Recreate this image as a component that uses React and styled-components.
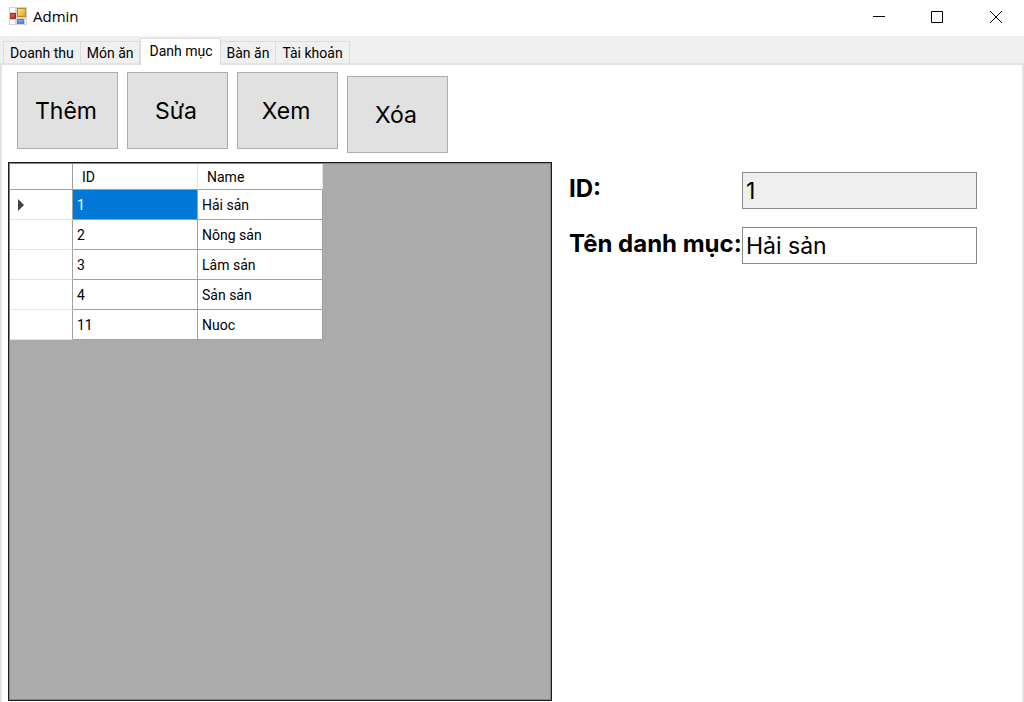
import React, { useState } from "react";
import styled, { createGlobalStyle } from "styled-components";

const GlobalStyle = createGlobalStyle`
  * { box-sizing: border-box; }
  body { margin: 0; background: #fff; color: #000; font: 14px/20px Roboto, "Liberation Sans", sans-serif; }
  button, input { font: inherit; color: inherit; }
`;

const Window = styled.div`
  display: flex;
  flex-direction: column;
  min-height: 100vh;
`;

const TitleBar = styled.header`
  display: flex;
  align-items: center;
  height: 36px;
  padding-left: 8px;
  background: #fff;
`;

const Title = styled.h1`
  flex: 1;
  margin: 0 0 0 6px;
  padding-bottom: 4px;
  font: 400 15px/20px "Open Sans", "Noto Sans", sans-serif;
`;

const AppIcon = styled.svg`
  display: block;
  margin-bottom: 4px;
`;

const CaptionButton = styled.button`
  display: grid;
  place-items: center;
  width: 58px;
  height: 36px;
  padding: 0 0 2px;
  border: 0;
  background: none;
`;

const TabStrip = styled.nav`
  display: flex;
  align-items: flex-end;
  height: 29px;
  padding-left: 3px;
  background: #efefef;
  box-shadow: inset 0 -2px #e3e3e3;
`;

const Tab = styled.button`
  height: ${(p) => (p.$active ? 27 : 24)}px;
  padding: ${(p) => (p.$active ? "0 7px 2px 8px" : "0 6px")};
  border: 1px solid #dcdcdc;
  border-bottom: ${(p) => (p.$active ? "0" : "2px solid #e3e3e3")};
  border-left-width: ${(p) => (p.$joined ? 0 : 1)}px;
  background: ${(p) => (p.$active ? "#fff" : "#f0f0f0")};
  white-space: nowrap;
`;

const Panel = styled.main`
  flex: 1;
  display: flex;
  flex-direction: column;
  padding: 7px 45px 1px 6px;
  border: solid #e3e3e3;
  border-width: 0 2px;
`;

const Toolbar = styled.div`
  display: flex;
  align-items: flex-start;
  gap: 9px;
  height: 90px;
  padding-left: 9px;
`;

const ActionButton = styled.button`
  width: 101px;
  height: 77px;
  margin-top: ${(p) => (p.$lowered ? 4 : 0)}px;
  padding: 0 3px 0 0;
  border: 1px solid #adadad;
  background: #e1e1e1;
  font: 400 23px/28px Inter, "Liberation Sans", sans-serif;
`;

const Content = styled.div`
  flex: 1;
  display: grid;
  grid-template-columns: minmax(0, 4fr) minmax(0, 3fr);
  gap: 17px;
`;

const GridView = styled.section`
  padding: 1px;
  border: 1px solid #1c1c1c;
  background: #ababab;
  box-shadow: inset 0 0 0 1px #858585;
`;

const Table = styled.table`
  table-layout: fixed;
  width: 313px;
  border-collapse: separate;
  border-spacing: 0;
  background: #fff;
`;

const HeadCell = styled.th`
  width: ${(p) => p.$width}px;
  height: 26px;
  padding: 0 9px;
  border-right: 1px solid ${(p) => (p.$strong ? "#a0a0a0" : "#e5e5e5")};
  border-bottom: 1px solid #a0a0a0;
  font-weight: 400;
  text-align: left;
`;

const RowHead = styled.th`
  height: 30px;
  padding: 0 7px;
  border-right: 1px solid #a0a0a0;
  border-bottom: 1px solid #e5e5e5;
  text-align: left;
`;

const Cell = styled.td`
  padding: 0 4px;
  border-right: 1px solid #a0a0a0;
  border-bottom: 1px solid #a0a0a0;
  background: ${(p) => (p.$selected ? "#0078d7" : "#fff")};
  color: ${(p) => (p.$selected ? "#fff" : "#000")};
`;

const Marker = styled.svg`
  display: block;
`;

const Form = styled.form`
  display: grid;
  grid-template-columns: 173px minmax(0, 1fr);
  grid-auto-rows: 37px;
  row-gap: 18px;
  align-content: start;
  padding-top: 10px;
`;

const Label = styled.label`
  white-space: nowrap;
  font: 700 24px/34px Inter, "Liberation Sans", sans-serif;
`;

const Input = styled.input`
  width: 100%;
  min-width: 0;
  padding: 0 3px;
  border: 1px solid #8a8a8a;
  border-radius: 0;
  outline: 0;
  background: ${(p) => (p.readOnly ? "#efefef" : "#fff")};
  font: 400 23px/32px Inter, "Liberation Sans", sans-serif;
  z-index: 1;
`;

const tabs = ["Doanh thu", "Món ăn", "Danh mục", "Bàn ăn", "Tài khoản"];
const categories = [
  { id: 1, name: "Hải sản" },
  { id: 2, name: "Nông sản" },
  { id: 3, name: "Lâm sản" },
  { id: 4, name: "Sản sản" },
  { id: 11, name: "Nuoc" },
];

function FormIcon() {
  return (
    <AppIcon width="19" height="18" viewBox="0 0 19 18" aria-hidden="true">
      <defs>
        <linearGradient id="gold" x1="0" y1="0" x2="1" y2="1">
          <stop offset="0" stopColor="#ffe692" />
          <stop offset="1" stopColor="#e0a10c" />
        </linearGradient>
        <linearGradient id="red" x1="0" y1="0" x2="1" y2="1">
          <stop offset="0" stopColor="#ee7b6c" />
          <stop offset="1" stopColor="#a81413" />
        </linearGradient>
        <linearGradient id="blue" x1="0" y1="0" x2="0" y2="1">
          <stop offset="0" stopColor="#8ab8fa" />
          <stop offset="1" stopColor="#3f7ce0" />
        </linearGradient>
      </defs>
      <rect x="1" y="0" width="18" height="18" fill="#d3d3d3" />
      <rect x="2" y="1" width="5" height="4" fill="#fff" />
      <rect x="2" y="13" width="5" height="4" fill="#fff" />
      <rect x="17" y="12" width="1" height="5" fill="#fff" />
      <rect x="2.5" y="6.5" width="5" height="5" fill="url(#red)" stroke="#a72b28" />
      <rect x="9.5" y="1.5" width="8" height="8" fill="url(#gold)" stroke="#c18b1b" />
      <rect x="9.5" y="12.5" width="6" height="4" fill="url(#blue)" stroke="#4b84df" />
    </AppIcon>
  );
}

export default function App() {
  const [active, setActive] = useState(2);
  const [selected, setSelected] = useState(0);
  const [name, setName] = useState(categories[0].name);

  const pick = (i) => {
    setSelected(i);
    setName(categories[i].name);
  };

  return (
    <Window>
      <GlobalStyle />
      <TitleBar>
        <FormIcon />
        <Title>Admin</Title>
        <CaptionButton aria-label="Minimize">
          <svg width="12" height="12" stroke="#000"><path d="M0 5.5H12" /></svg>
        </CaptionButton>
        <CaptionButton aria-label="Maximize">
          <svg width="12" height="12" fill="none" stroke="#000"><path d="M.5 .5H11.5V11.5H.5Z" /></svg>
        </CaptionButton>
        <CaptionButton aria-label="Close">
          <svg width="14" height="12" stroke="#000"><path d="M2 0L14 12M14 0L2 12" /></svg>
        </CaptionButton>
      </TitleBar>
      <TabStrip>
        {tabs.map((t, i) => (
          <Tab key={t} $active={i === active} $joined={i > 0 && i !== active} onClick={() => setActive(i)}>
            {t}
          </Tab>
        ))}
      </TabStrip>
      <Panel>
        <Toolbar>
          <ActionButton>Thêm</ActionButton>
          <ActionButton>Sửa</ActionButton>
          <ActionButton>Xem</ActionButton>
          <ActionButton $lowered>Xóa</ActionButton>
        </Toolbar>
        <Content>
          <GridView>
            <Table>
              <thead>
                <tr>
                  <HeadCell $width={63} $strong />
                  <HeadCell $width={125}>ID</HeadCell>
                  <HeadCell $width={125}>Name</HeadCell>
                </tr>
              </thead>
              <tbody>
                {categories.map((c, i) => (
                  <tr key={c.id} onClick={() => pick(i)}>
                    <RowHead>
                      {i === selected && (
                        <Marker width="8" height="12" viewBox="0 0 8 12" fill="#404040">
                          <path d="M1 0L7 6L1 12Z" />
                        </Marker>
                      )}
                    </RowHead>
                    <Cell $selected={i === selected}>{c.id}</Cell>
                    <Cell>{c.name}</Cell>
                  </tr>
                ))}
              </tbody>
            </Table>
          </GridView>
          <Form onSubmit={(e) => e.preventDefault()}>
            <Label htmlFor="category-id">ID:</Label>
            <Input id="category-id" readOnly value={categories[selected].id} />
            <Label htmlFor="category-name">Tên danh mục:</Label>
            <Input id="category-name" value={name} onChange={(e) => setName(e.target.value)} />
          </Form>
        </Content>
      </Panel>
    </Window>
  );
}
